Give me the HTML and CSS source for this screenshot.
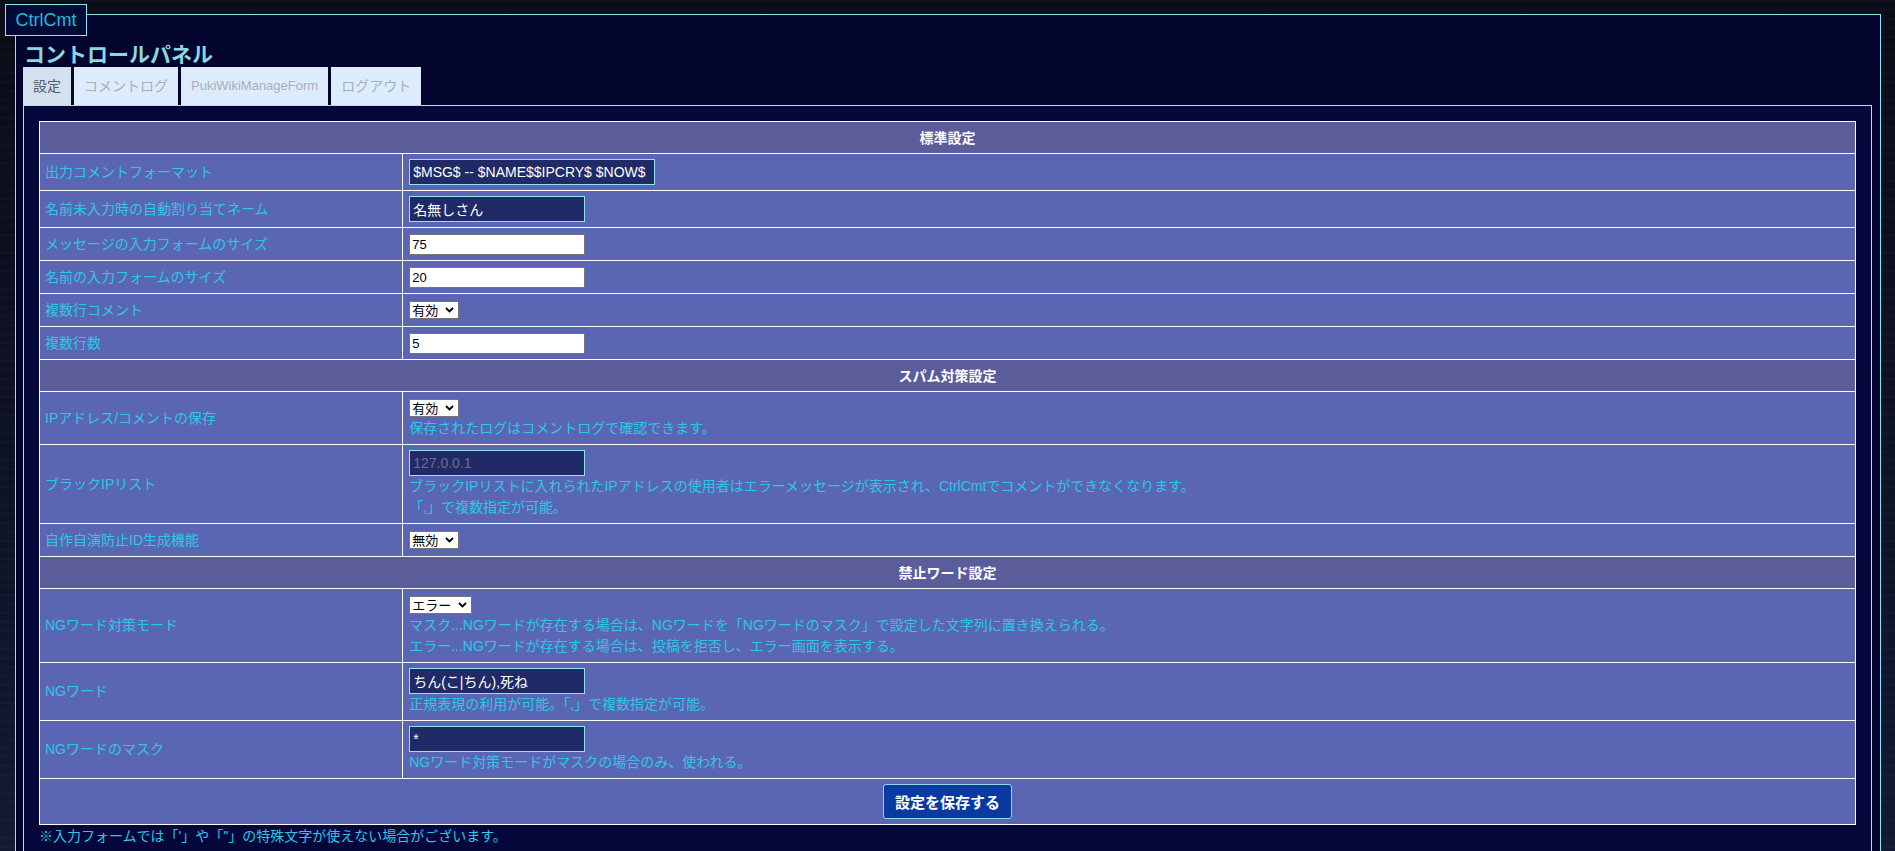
FILE: index.html
```html
<!DOCTYPE html>
<html lang="ja">
<head>
<meta charset="utf-8">
<title>CtrlCmt - コントロールパネル</title>
<link rel="stylesheet" href="styles.css">
</head>
<body>
<div class="frame">
  <div class="legend">CtrlCmt</div>
  <h1 class="title">コントロールパネル</h1>
  <nav class="tabs">
    <a class="tab active">設定</a>
    <a class="tab">コメントログ</a>
    <a class="tab tab-latin">PukiWikiManageForm</a>
    <a class="tab">ログアウト</a>
  </nav>
  <div class="panel">
    <table class="settings">
      <tr><th colspan="2">標準設定</th></tr>
      <tr>
        <td class="label">出力コメントフォーマット</td>
        <td><div class="ctl"><input class="in-dark wide" type="text" value="$MSG$ -- $NAME$$IPCRY$ $NOW$"></div></td>
      </tr>
      <tr>
        <td class="label">名前未入力時の自動割り当てネーム</td>
        <td><div class="ctl"><input class="in-dark" type="text" value="名無しさん"></div></td>
      </tr>
      <tr>
        <td class="label">メッセージの入力フォームのサイズ</td>
        <td><div class="ctl"><input class="in-white" type="text" value="75"></div></td>
      </tr>
      <tr>
        <td class="label">名前の入力フォームのサイズ</td>
        <td><div class="ctl"><input class="in-white" type="text" value="20"></div></td>
      </tr>
      <tr>
        <td class="label">複数行コメント</td>
        <td><div class="ctl"><select class="sel"><option>有効</option><option>無効</option></select></div></td>
      </tr>
      <tr>
        <td class="label">複数行数</td>
        <td><div class="ctl"><input class="in-white" type="text" value="5"></div></td>
      </tr>
      <tr><th colspan="2">スパム対策設定</th></tr>
      <tr>
        <td class="label">IPアドレス/コメントの保存</td>
        <td>
          <div class="ctl ctl-tight"><select class="sel"><option>有効</option><option>無効</option></select></div>
          <div class="note">保存されたログはコメントログで確認できます。</div>
        </td>
      </tr>
      <tr>
        <td class="label">ブラックIPリスト</td>
        <td>
          <div class="ctl"><input class="in-dark" type="text" placeholder="127.0.0.1"></div>
          <div class="note">ブラックIPリストに入れられたIPアドレスの使用者はエラーメッセージが表示され、CtrlCmtでコメントができなくなります。</div>
          <div class="note">「,」で複数指定が可能。</div>
        </td>
      </tr>
      <tr>
        <td class="label">自作自演防止ID生成機能</td>
        <td><div class="ctl"><select class="sel"><option>無効</option><option>有効</option></select></div></td>
      </tr>
      <tr><th colspan="2">禁止ワード設定</th></tr>
      <tr>
        <td class="label">NGワード対策モード</td>
        <td>
          <div class="ctl ctl-tight"><select class="sel sel-wide"><option>エラー</option><option>マスク</option></select></div>
          <div class="note">マスク...NGワードが存在する場合は、NGワードを「NGワードのマスク」で設定した文字列に置き換えられる。</div>
          <div class="note">エラー...NGワードが存在する場合は、投稿を拒否し、エラー画面を表示する。</div>
        </td>
      </tr>
      <tr>
        <td class="label">NGワード</td>
        <td>
          <div class="ctl"><input class="in-dark" type="text" value="ちん(こ|ちん),死ね"></div>
          <div class="note">正規表現の利用が可能。「,」で複数指定が可能。</div>
        </td>
      </tr>
      <tr>
        <td class="label">NGワードのマスク</td>
        <td>
          <div class="ctl"><input class="in-dark" type="text" value="*"></div>
          <div class="note">NGワード対策モードがマスクの場合のみ、使われる。</div>
        </td>
      </tr>
      <tr>
        <td colspan="2" class="save-cell"><button class="save" type="button">設定を保存する</button></td>
      </tr>
    </table>
    <p class="foot">※入力フォームでは「'」や「"」の特殊文字が使えない場合がございます。</p>
    <p class="foot">どうしても利用したい場合は本家コードを利用するか、直接ソースコードを編集してください。</p>
  </div>
</div>
</body>
</html>
```

FILE: styles.css
```css
html {
  overflow: hidden;
}

body {
  margin: 0;
  min-height: 100vh;
  font-family: "Liberation Sans", "Noto Sans CJK JP", sans-serif;
  background:
    repeating-linear-gradient(180deg, rgba(120, 140, 200, 0.03) 0 2px, transparent 2px 9px),
    linear-gradient(180deg, #0a0c17 0%, #0f1429 60%, #161c36 100%);
}

.frame {
  position: relative;
  margin: 14px 14px 0 15px;
  padding: 24px 8px 60px 7px;
  border: 1px solid #8fe3f2;
  background:
    repeating-linear-gradient(180deg, rgba(90, 110, 200, 0.025) 0 1px, transparent 1px 6px),
    #03042d;
}

.legend {
  position: absolute;
  left: -11px;
  top: -11px;
  width: 82px;
  height: 32px;
  box-sizing: border-box;
  border: 1px solid #8fe3f2;
  background: #020a36;
  color: #26b9d9;
  font-family: "Liberation Sans", sans-serif;
  font-size: 18px;
  line-height: 30px;
  text-align: center;
}

.title {
  margin: 0;
  padding-left: 1px;
  font-family: "Noto Sans CJK JP", sans-serif;
  font-size: 21px;
  line-height: 28px;
  font-weight: bold;
  color: #8ad8e2;
}

.tabs {
  display: flex;
  gap: 3px;
  height: 38px;
}

.tab {
  display: block;
  padding: 0 10px;
  font-size: 14px;
  line-height: 38px;
  background: #dcecfc;
  color: #a8afb8;
}

.tab-latin {
  font-size: 13px;
}

.tab.active {
  background: #d3e1ef;
  color: #555a60;
}

.panel {
  padding: 15px 15px 40px;
  border: 1px solid #c9d3f2;
  background: #05073a;
}

.settings {
  width: 100%;
  border-collapse: collapse;
  font-size: 14px;
}

.settings th,
.settings td {
  border: 1px solid #ffffff;
  padding: 5px 6px;
  line-height: 21px;
  vertical-align: middle;
}

.settings th {
  background: #5a5d9a;
  color: #ffffff;
  font-weight: bold;
  text-align: center;
  font-family: "Noto Sans CJK JP", sans-serif;
}

.settings td {
  background: #5a66b3;
  color: #2ec6e6;
}

.settings td.label {
  width: 20%;
  padding-left: 5px;
}

.ctl {
  display: flex;
  align-items: center;
  min-height: 22px;
}

.ctl-tight {
  min-height: 21px;
}

.note {
  height: 21px;
  color: #2ec6e6;
  line-height: 21px;
  white-space: nowrap;
}

.in-dark {
  width: 176px;
  height: 26px;
  box-sizing: border-box;
  margin: 0;
  padding: 0 3px;
  border: 1px solid #8fe4f4;
  background: #1f2a66;
  color: #ffffff;
  font-family: "Liberation Sans", "Noto Sans CJK JP", sans-serif;
  font-size: 14px;
}

.in-dark.wide {
  width: 246px;
}

.in-dark::placeholder {
  color: #6b7090;
}

.in-white {
  width: 176px;
  height: 21px;
  box-sizing: border-box;
  margin: 0;
  padding: 0 2px;
  border: 1px solid #767676;
  background: #ffffff;
  color: #000000;
  font-family: "Liberation Sans", "Noto Sans CJK JP", sans-serif;
  font-size: 13px;
}

.sel {
  appearance: none;
  -webkit-appearance: none;
  width: 50px;
  height: 18px;
  box-sizing: border-box;
  margin: 0;
  padding: 0 14px 0 2px;
  border: 1px solid #767676;
  border-radius: 0;
  background: #ffffff url("data:image/svg+xml,%3Csvg xmlns='http://www.w3.org/2000/svg' width='9' height='6' viewBox='0 0 9 6'%3E%3Cpath d='M1 1l3.5 3.5L8 1' fill='none' stroke='%23000' stroke-width='1.8'/%3E%3C/svg%3E") no-repeat right 4px center;
  color: #000000;
  font-family: "Noto Sans CJK JP", sans-serif;
  font-size: 13px;
  line-height: 16px;
}

.sel-wide {
  width: 63px;
}

.save-cell {
  text-align: center;
}

.save {
  height: 35px;
  padding: 0 11px;
  border: 1px solid #90d8f0;
  border-radius: 3px;
  background: #0a3aa0;
  color: #ffffff;
  font-family: "Noto Sans CJK JP", sans-serif;
  font-size: 15px;
  font-weight: bold;
}

.foot {
  margin: 0;
  color: #2ec6e6;
  font-size: 14px;
  line-height: 22px;
}
```
